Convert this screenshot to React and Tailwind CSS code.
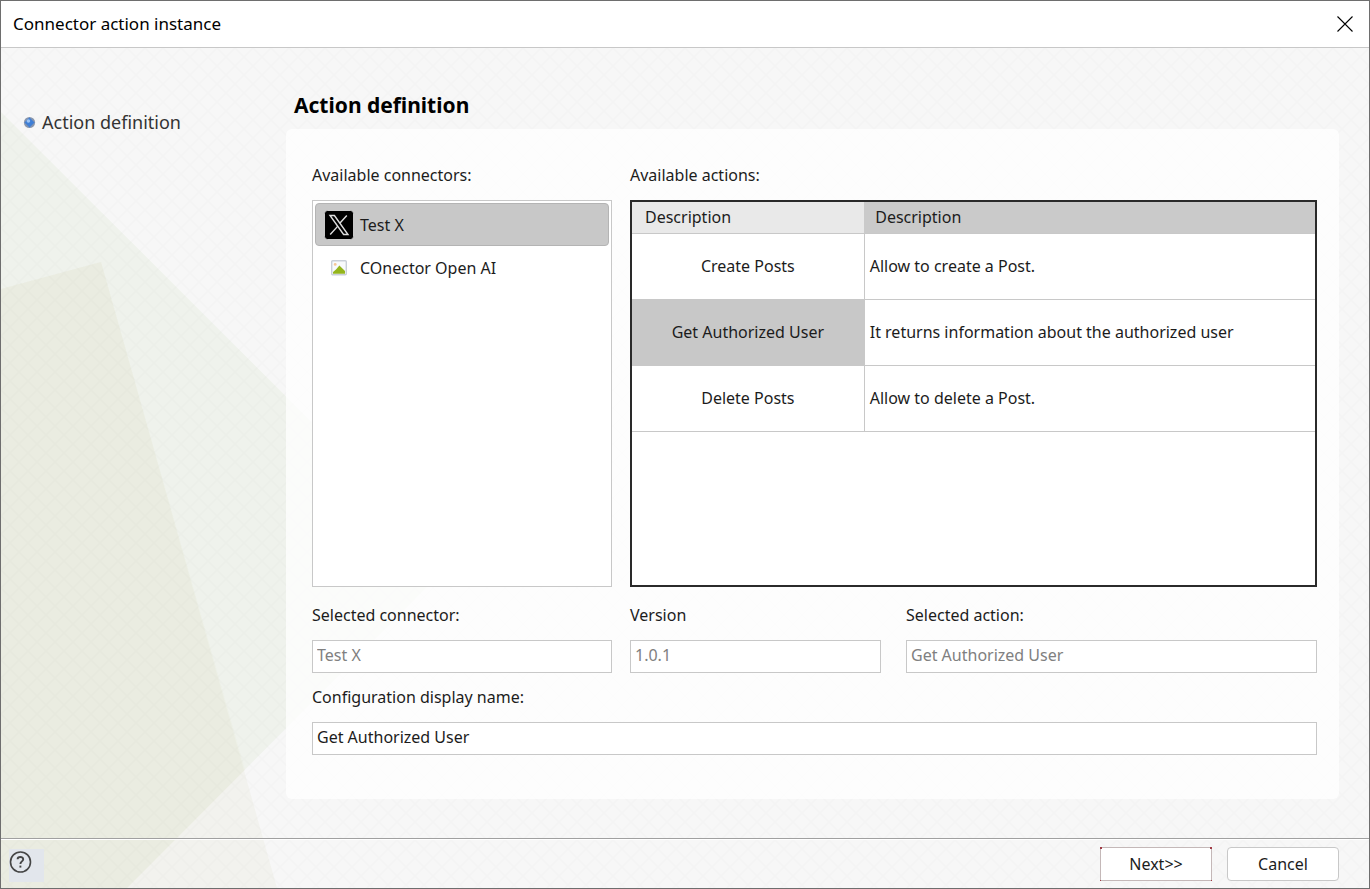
import React, { useState } from 'react';

const connectors = [
    { id: 'x', label: 'Test X', icon: XLogo },
    { id: 'openai', label: 'COnector Open AI', icon: PictureIcon },
];

const actions = [
    { name: 'Create Posts', description: 'Allow to create a Post.' },
    { name: 'Get Authorized User', description: 'It returns information about the authorized user' },
    { name: 'Delete Posts', description: 'Allow to delete a Post.' },
];

function XLogo() {
    return (
        <svg width="30" height="30" viewBox="0 0 30 30" aria-hidden="true">
            <rect x="0.5" y="0.5" width="29" height="29" rx="3" fill="#000" stroke="#e4e4e4" strokeWidth="0.8" />
            <g fill="none" stroke="#dedede" strokeWidth="1.4">
                <path d="M6 5.5 H10.4 L24 24.5 H19.6 Z" />
                <path d="M22.8 5.5 L15.8 13.2 M13.6 16.4 L6.2 24.5" />
            </g>
        </svg>
    );
}

function PictureIcon() {
    return (
        <svg width="16" height="16" viewBox="0 0 16 16" aria-hidden="true">
            <rect x="0.7" y="0.7" width="14.6" height="14" rx="1" fill="#f8fafc" stroke="#c9cfd8" strokeWidth="1.4" />
            <circle cx="4.2" cy="4.4" r="1.4" fill="#f6c795" />
            <path d="M2 13.8 V12 L5 9.6 L8.4 5.4 L14 11 V13.8 Z" fill="#94b51c" />
        </svg>
    );
}

function Backdrop() {
    return (
        <svg className="absolute inset-0 w-full h-full" viewBox="0 0 1368 840" preserveAspectRatio="xMinYMax slice" aria-hidden="true">
            <defs>
                <pattern id="lattice" width="18" height="18" patternUnits="userSpaceOnUse">
                    <path d="M-1 -1 L19 19 M19 -1 L-1 19" stroke="#000" strokeOpacity="0.012" strokeWidth="1.3" fill="none" />
                </pattern>
            </defs>
            <path d="M0 64 L451 514 L126 840 H0 Z" fill="#eff2ec" />
            <path d="M0 241 L100 214 L276 840 H0 Z" fill="#e3e2cc" fillOpacity="0.2" />
            <path d="M0 241 L100 214 L244 722 L126 840 H0 Z" fill="#e3e2cc" fillOpacity="0.15" />
            <rect width="1368" height="840" fill="url(#lattice)" />
        </svg>
    );
}

const Field = ({ id, label, ...props }) => (
    <div className="flex flex-col min-w-0">
        <label htmlFor={id} className="text-base leading-6 mb-[13px]">{label}</label>
        <input
            id={id}
            type="text"
            className="w-full h-[33px] px-1 pb-[3px] text-base bg-white border border-[#c8c8c8] read-only:text-[#808080] outline-none"
            {...props}
        />
    </div>
);

export default function App() {
    const [connector, setConnector] = useState('x');
    const [action, setAction] = useState('Get Authorized User');
    const [displayName, setDisplayName] = useState('Get Authorized User');
    const selected = connectors.find((c) => c.id === connector);

    return (
        <div className="min-h-screen flex flex-col border border-[#6e6e6e] bg-[#f7f7f7] text-[#1c1c1c] font-['Noto_Sans','Open_Sans',sans-serif]">
            {/* Title bar */}
            <header className="h-[47px] shrink-0 flex items-center justify-between pl-3 pr-4 bg-white border-b border-[#c8c8c8]">
                <span className="text-[17px] text-black">Connector action instance</span>
                <button type="button" aria-label="Close" className="w-4 h-4">
                    <svg width="16" height="16" viewBox="0 0 16 16" stroke="#000" strokeWidth="1.1">
                        <path d="M0.5 0.5 L15.5 15.5 M15.5 0.5 L0.5 15.5" />
                    </svg>
                </button>
            </header>

            <div className="relative flex-1 flex flex-col">
                <Backdrop />

                <div className="relative flex-1 flex">
                    {/* Wizard steps */}
                    <nav className="w-[285px] shrink-0 pt-[60px] pl-[22px]">
                        <a href="#definition" className="flex items-center gap-[6px] text-lg leading-7 text-[#333]">
                            <svg width="13" height="13" viewBox="0 0 13 13" aria-hidden="true">
                                <circle cx="6.5" cy="6.5" r="5.6" fill="#8795ad" />
                                <path d="M6.5 1.5 L11.5 6.5 L6.5 11.5 L1.5 6.5 Z" fill="#3f7fd6" />
                                <circle cx="5.4" cy="5" r="1.8" fill="#9cc4f5" />
                            </svg>
                            Action definition
                        </a>
                    </nav>

                    <main id="definition" className="flex-1 min-w-0 flex flex-col pr-[30px] pb-[39px]">
                        <h1 className="pl-2 pt-[41px] pb-2 text-[21px] leading-8 font-bold text-black">Action definition</h1>

                        <section className="flex-1 flex flex-col gap-4 pt-[34px] pl-[26px] pr-[22px] pb-11 rounded-md bg-white/75">
                            <div className="flex-1 grid grid-cols-[300px_1fr] gap-[18px]">
                                <div className="flex flex-col">
                                    <h2 className="text-base leading-6 mb-[13px]">Available connectors:</h2>
                                    <ul className="flex-1 p-[2px] bg-white border border-[#c8c8c8]">
                                        {connectors.map((item) => (
                                            <li key={item.id}>
                                                <button
                                                    type="button"
                                                    onClick={() => setConnector(item.id)}
                                                    className={`w-full h-[43px] flex items-center gap-[6px] pl-2 text-base text-left rounded-sm border
                                                        ${connector === item.id ? 'bg-[#c8c8c8] border-[#b4b4b4]' : 'border-transparent'}
                                                    `}
                                                >
                                                    <span className="w-[30px] flex justify-center"><item.icon /></span>
                                                    {item.label}
                                                </button>
                                            </li>
                                        ))}
                                    </ul>
                                </div>

                                <div className="flex flex-col min-w-0">
                                    <h2 className="text-base leading-6 mb-[13px]">Available actions:</h2>
                                    <div className="flex-1 bg-white border-2 border-[#2a2a2a]">
                                        <table className="w-full table-fixed border-collapse text-base">
                                            <thead>
                                                <tr className="h-[31px]">
                                                    <th className="w-[34%] pl-[13px] text-left font-normal bg-[#e9e9e9] border-b border-[#c8c8c8]">Description</th>
                                                    <th className="pl-[11px] text-left font-normal bg-[#cacaca] border-b border-[#c8c8c8]">Description</th>
                                                </tr>
                                            </thead>
                                            <tbody>
                                                {actions.map((row) => (
                                                    <tr key={row.name} className="h-[66px] border-b border-[#c8c8c8] cursor-default" onClick={() => setAction(row.name)}>
                                                        <td className={`text-center border-r border-[#c8c8c8] ${action === row.name ? 'bg-[#c8c8c8]' : ''}`}>{row.name}</td>
                                                        <td className="pl-[5px]">{row.description}</td>
                                                    </tr>
                                                ))}
                                            </tbody>
                                        </table>
                                    </div>
                                </div>
                            </div>

                            <div className="grid grid-cols-[300px_1fr] gap-[18px]">
                                <Field id="selected-connector" label="Selected connector:" value={selected.label} readOnly />
                                <div className="grid grid-cols-[251fr_411fr] gap-[25px]">
                                    <Field id="version" label="Version" value="1.0.1" readOnly />
                                    <Field id="selected-action" label="Selected action:" value={action} readOnly />
                                </div>
                            </div>

                            <div className="-mt-1">
                                <Field
                                    id="display-name"
                                    label="Configuration display name:"
                                    value={displayName}
                                    onChange={(e) => setDisplayName(e.target.value)}
                                />
                            </div>
                        </section>
                    </main>
                </div>

                {/* Wizard buttons */}
                <footer className="relative h-[50px] shrink-0 flex items-center justify-between pl-2 pr-[30px] border-t border-[#a0a0a0] shadow-[inset_0_1px_0_#fff]">
                    <button type="button" aria-label="Help" className="w-[35px] h-[33px] mt-1 bg-[#e2e6ec]">
                        <svg width="24" height="24" viewBox="0 0 24 24" fill="none" stroke="#454545" className="-mt-2">
                            <circle cx="11.5" cy="12" r="10" strokeWidth="1.6" />
                            <path d="M8.6 9.2 C8.6 6.2 14.2 6.2 14.2 9.2 C14.2 11.4 11.4 11.4 11.4 14" strokeWidth="1.9" />
                            <path d="M11.4 15.6 V17.6" strokeWidth="1.9" />
                        </svg>
                    </button>
                    <div className="flex gap-[15px]">
                        <button type="button" className="relative w-28 h-[34px] text-base bg-white border border-[#c4b8b8]">
                            Next&gt;&gt;
                            <span className="absolute -top-px -left-px w-[2px] h-[2px] bg-[#a03c46]" />
                            <span className="absolute -top-px -right-px w-[2px] h-[2px] bg-[#a03c46]" />
                            <span className="absolute -bottom-px -left-px w-px h-px bg-[#a03c46]" />
                            <span className="absolute -bottom-px -right-px w-px h-px bg-[#a03c46]" />
                        </button>
                        <button type="button" className="w-28 h-[34px] text-base bg-white border border-[#c8c8c8] rounded-sm">Cancel</button>
                    </div>
                </footer>
            </div>
        </div>
    );
}
